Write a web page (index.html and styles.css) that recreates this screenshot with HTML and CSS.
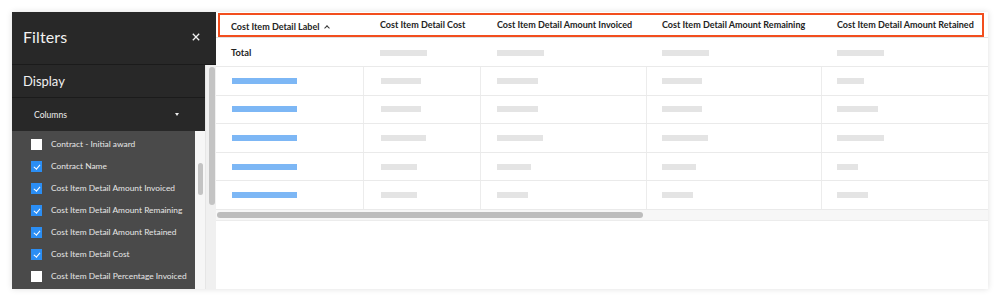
FILE: index.html
```html
<!DOCTYPE html>
<html>
<head>
<meta charset="utf-8">
<link rel="stylesheet" href="styles.css">
</head>
<body>
<div class="page">
  <div class="card">
    <aside class="sidebar">
      <div class="sb-head">
        <span class="sb-title">Filters</span>
        <svg class="sb-close" width="8" height="8" viewBox="0 0 8 8"><path d="M0.8 0.8 L7.2 7.2 M7.2 0.8 L0.8 7.2" stroke="#f2f2f2" stroke-width="1.3" fill="none"/></svg>
      </div>
      <div class="sb-body">
        <div class="sb-main">
          <div class="sb-section">Display</div>
          <div class="sb-columns"><span>Columns</span><span class="caret"></span></div>
          <div class="sb-listwrap">
            <ul class="sb-list">
              <li><span class="cb"></span>Contract - Initial award</li>
              <li><span class="cb on"></span>Contract Name</li>
              <li><span class="cb on"></span>Cost Item Detail Amount Invoiced</li>
              <li><span class="cb on"></span>Cost Item Detail Amount Remaining</li>
              <li><span class="cb on"></span>Cost Item Detail Amount Retained</li>
              <li><span class="cb on"></span>Cost Item Detail Cost</li>
              <li><span class="cb"></span>Cost Item Detail Percentage Invoiced</li>
            </ul>
            <div class="inner-track"><div class="inner-thumb"></div></div>
          </div>
        </div>
        <div class="outer-track"><div class="outer-thumb"></div></div>
      </div>
    </aside>
    <main class="table">
      <div class="row head">
        <div class="c c1"><span class="sorted">Cost Item Detail Label <span class="up"></span></span></div>
        <div class="c c2">Cost Item Detail Cost</div>
        <div class="c c3">Cost Item Detail Amount Invoiced</div>
        <div class="c c4">Cost Item Detail Amount Remaining</div>
        <div class="c c5">Cost Item Detail Amount Retained</div>
        <div class="highlight"></div>
      </div>
      <div class="row total">
        <div class="c c1"><b>Total</b></div>
        <div class="c c2"><i class="ph" style="width:47px"></i></div>
        <div class="c c3"><i class="ph" style="width:47px"></i></div>
        <div class="c c4"><i class="ph" style="width:47px"></i></div>
        <div class="c c5"><i class="ph" style="width:47px"></i></div>
      </div>
      <div class="row data">
        <div class="c c1"><i class="link"></i></div>
        <div class="c c2"><i class="ph" style="width:40px"></i></div>
        <div class="c c3"><i class="ph" style="width:41px"></i></div>
        <div class="c c4"><i class="ph" style="width:40px"></i></div>
        <div class="c c5"><i class="ph" style="width:27px"></i></div>
      </div>
      <div class="row data">
        <div class="c c1"><i class="link"></i></div>
        <div class="c c2"><i class="ph" style="width:40px"></i></div>
        <div class="c c3"><i class="ph" style="width:41px"></i></div>
        <div class="c c4"><i class="ph" style="width:40px"></i></div>
        <div class="c c5"><i class="ph" style="width:41px"></i></div>
      </div>
      <div class="row data">
        <div class="c c1"><i class="link"></i></div>
        <div class="c c2"><i class="ph" style="width:45px"></i></div>
        <div class="c c3"><i class="ph" style="width:46px"></i></div>
        <div class="c c4"><i class="ph" style="width:46px"></i></div>
        <div class="c c5"><i class="ph" style="width:47px"></i></div>
      </div>
      <div class="row data">
        <div class="c c1"><i class="link"></i></div>
        <div class="c c2"><i class="ph" style="width:36px"></i></div>
        <div class="c c3"><i class="ph" style="width:34px"></i></div>
        <div class="c c4"><i class="ph" style="width:34px"></i></div>
        <div class="c c5"><i class="ph" style="width:21px"></i></div>
      </div>
      <div class="row data">
        <div class="c c1"><i class="link"></i></div>
        <div class="c c2"><i class="ph" style="width:36px"></i></div>
        <div class="c c3"><i class="ph" style="width:31px"></i></div>
        <div class="c c4"><i class="ph" style="width:31px"></i></div>
        <div class="c c5"><i class="ph" style="width:31px"></i></div>
      </div>
      <div class="hscroll"><div class="hthumb"></div></div>
    </main>
  </div>
</div>
</body>
</html>
```

FILE: styles.css
```css
* { box-sizing: border-box; margin: 0; padding: 0; }
html, body { background: #fff; }
body { font-family: Lato, "Open Sans", Arial, sans-serif; width: 1000px; height: 301px; overflow: hidden; }
.page { padding: 12px; }
.card {
  width: 976px; height: 277px; display: flex; background: #fff;
  box-shadow: 0 0 6px rgba(0,0,0,0.13);
}
.sidebar { width: 204px; display: flex; flex-direction: column; flex: none; }
.sb-head {
  height: 53px; background: #282828; border-bottom: 1px solid #1b1b1b;
  display: flex; align-items: center; justify-content: space-between;
  padding: 0 16px 3px 11px; color: #f2f2f2;
}
.sb-title { font-size: 16px; letter-spacing: 0.1px; }
.sb-close { display: block; }
.sb-body { flex: 1; display: flex; min-height: 0; }
.sb-main { width: 193px; display: flex; flex-direction: column; }
.sb-section {
  height: 33px; background: #282828; border-bottom: 1px solid #1b1b1b;
  color: #f0f0f0; font-size: 13px; display: flex; align-items: center; padding-left: 11px;
}
.sb-columns {
  height: 33px; background: #282828; color: #eee; font-size: 8.6px;
  display: flex; align-items: center; justify-content: space-between; padding: 0 26px 0 22px;
}
.caret { width: 0; height: 0; border-left: 2.5px solid transparent; border-right: 2.5px solid transparent; border-top: 3px solid #eee; }
.sb-listwrap { flex: 1; display: flex; }
.sb-list { list-style: none; width: 183px; background: #4a4a4a; padding-top: 2px; }
.sb-list li {
  height: 22px; display: flex; align-items: center; padding-left: 19px;
  color: #e6e6e6; font-size: 8.4px; white-space: nowrap;
}
.cb { width: 11px; height: 11px; background: #fff; margin-right: 9px; flex: none; position: relative; }
.cb.on { background: #2b8ef4; }
.cb.on::after {
  content: ""; position: absolute; left: 4px; top: 2px; width: 2.5px; height: 5px;
  border-right: 1px solid #fff; border-bottom: 1px solid #fff; transform: rotate(40deg);
}
.inner-track { width: 10px; background: #f6f6f6; padding: 32px 2px 0 3px; }
.inner-thumb { width: 5px; height: 32px; background: #c3c3c3; border-radius: 3px; }
.outer-track { width: 11px; background: #f0f0f0; padding: 2px 2px 0 3px; border-left: 1px solid #e6e6e6; }
.outer-thumb { width: 6px; height: 138px; background: #c4c4c4; border-radius: 3px; }

.table { flex: 1; display: flex; flex-direction: column; position: relative; color: #232323; }
.row { display: flex; }
.c { display: flex; align-items: center; padding-left: 15px; flex: none; }
.c1 { width: 148px; }
.c2 { width: 117px; padding-left: 16px; }
.c3 { width: 166px; padding-left: 16px; }
.c4 { width: 175px; padding-left: 15px; }
.c5 { width: 166px; padding-left: 15px; }
.head { height: 26px; border-bottom: 1px solid #e2e2e2; font-size: 9px; font-weight: bold; white-space: nowrap; position: relative; }
.head .c { padding-bottom: 1px; }
.sorted { border-bottom: 1px solid #5a5a5a; padding: 7px 0 3px; display: inline-flex; align-items: center; margin-top: 1px; }
.up {
  display: inline-block; width: 4px; height: 4px; margin-left: 6px; margin-right: 2px; margin-top: 3px;
  border-left: 1.2px solid #333; border-top: 1.2px solid #333; transform: rotate(45deg);
}
.highlight {
  position: absolute; left: 2px; top: 1px; width: 766px; height: 24px;
  border: 2px solid #f24e1e;
}
.total { height: 29px; border-bottom: 1px solid #eaeaea; padding-top: 1px; }
.total b { font-size: 9.3px; font-weight: bold; color: #232323; }
.total .ph { margin-top: 1px; }
.data { height: 28.6px; border-bottom: 1px solid #eaeaea; }
.data .c { border-right: 1px solid #ececec; }
.data .c5 { border-right: none; }
.ph { display: block; height: 6px; background: #e4e4e4; }
.link { display: block; width: 65px; height: 6px; background: #7db7f5; margin-left: 1px; }
.data .c2 .ph { margin-left: 1px; }
.hscroll { height: 11px; background: #f7f7f7; border-bottom: 1px solid #ececec; padding: 2px 0 0 1px; }
.hthumb { width: 426px; height: 6px; background: #bdbdbd; border-radius: 3px; }
```
